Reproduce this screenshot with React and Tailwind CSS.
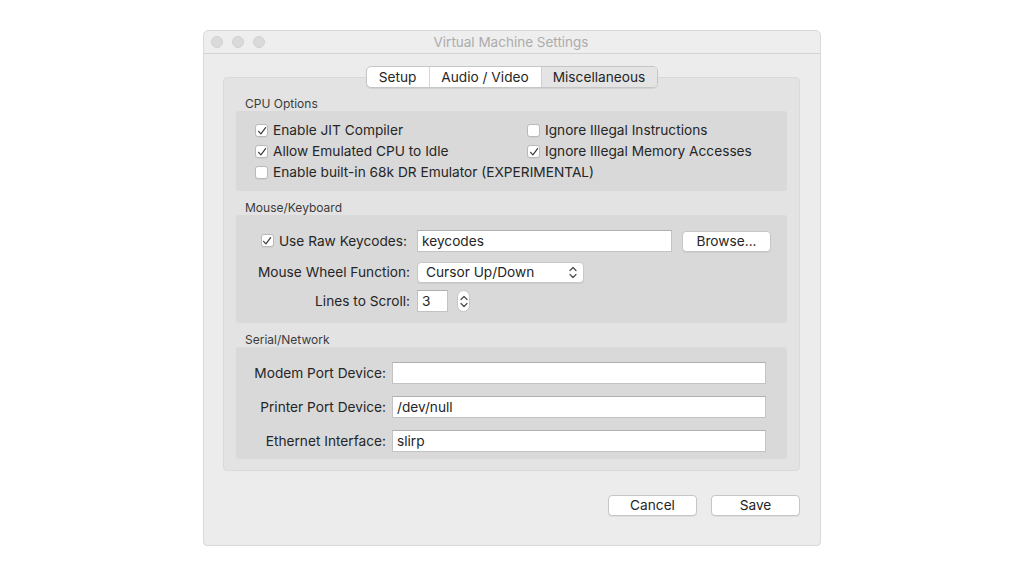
import React from 'react';

const CheckMark = () => (
  <svg width="10" height="10" viewBox="0 0 10 10">
    <path d="M1.6 5.3 L3.9 7.8 L8.6 1.6" fill="none" stroke="#3a3a3a" strokeWidth="1.2" strokeLinecap="round" strokeLinejoin="round" />
  </svg>
);

const Checkbox = ({ checked }) => (
  <span className="w-[13px] h-[13px] shrink-0 bg-white border border-[#b9b9b9] rounded-[3px] flex items-center justify-center shadow-[0_1px_0_rgba(0,0,0,0.04)]">
    {checked && <CheckMark />}
  </span>
);

const CheckRow = ({ checked, label, className = '' }) => (
  <div className={`h-[21px] flex items-center gap-[5px] ${className}`}>
    <Checkbox checked={checked} />
    <span>{label}</span>
  </div>
);

const UpDown = ({ className = '' }) => (
  <svg width="8" height="13" viewBox="0 0 8 13" className={className}>
    <path d="M1 4.5 L4 1.5 L7 4.5" fill="none" stroke="#4a4a4a" strokeWidth="1.2" strokeLinecap="round" strokeLinejoin="round" />
    <path d="M1 8.5 L4 11.5 L7 8.5" fill="none" stroke="#4a4a4a" strokeWidth="1.2" strokeLinecap="round" strokeLinejoin="round" />
  </svg>
);

const TextField = ({ value, className = '' }) => (
  <div className={`h-[22px] bg-white border border-[#c3c3c3] border-t-[#b0b0b0] flex items-center pt-[1px] px-[4px] ${className}`}>
    {value}
  </div>
);

const SectionLabel = ({ children, className = '' }) => (
  <div className={`h-[15px] leading-[15px] pl-[9px] text-[12px] text-[#3c3c3c] ${className}`}>{children}</div>
);

const Tabs = () => (
  <div className="relative z-10 flex justify-center">
    <div className="flex h-[22px] border border-[#c6c6c6] rounded-[5px] overflow-hidden bg-white shadow-[0_1px_1px_rgba(0,0,0,0.08)]">
      <div className="w-[63px] flex items-center justify-center border-r border-[#d6d6d6]">Setup</div>
      <div className="w-[111px] flex items-center justify-center">Audio / Video</div>
      <div className="w-[116px] flex items-center justify-center bg-[#e4e4e4] border-l border-[#d0d0d0]">Miscellaneous</div>
    </div>
  </div>
);

export default function App() {
  return (
    <div className="w-[1024px] h-[576px] bg-white font-['Inter',sans-serif] text-[13.7px] text-[#262626] pt-[30px] flex justify-center items-start">
      <div className="w-[618px] h-[516px] bg-[#ececec] border border-[#d9d9d9] rounded-t-[5px] rounded-b-[4px] flex flex-col">
        {/* title bar */}
        <div className="h-[23px] shrink-0 flex items-center border-b border-[#d3d3d3] bg-[#eeeeee] rounded-t-[5px]">
          <div className="flex gap-[9px] pl-[7px]">
            <span className="w-[12px] h-[12px] rounded-full bg-[#dadada] border border-[#d2d2d2]" />
            <span className="w-[12px] h-[12px] rounded-full bg-[#dadada] border border-[#d2d2d2]" />
            <span className="w-[12px] h-[12px] rounded-full bg-[#dadada] border border-[#d2d2d2]" />
          </div>
          <div className="flex-1 text-center text-[13.5px] text-[#acacac] pr-[63px]">Virtual Machine Settings</div>
        </div>

        <div className="pt-[12px] pl-[19px] pr-[20px] flex flex-col">
          <Tabs />
          <div className="-mt-[11px] bg-[#e3e3e3] border border-[#dadada] rounded-[4px] pt-[18px] pb-[11px] px-[12px]">
            {/* CPU Options */}
            <SectionLabel>CPU Options</SectionLabel>
            <div className="h-[80px] bg-[#d9d9d9] rounded-[3px] pt-[9px] pl-[19px] grid grid-cols-[272px_1fr] content-start">
              <CheckRow checked label="Enable JIT Compiler" />
              <CheckRow label="Ignore Illegal Instructions" />
              <CheckRow checked label="Allow Emulated CPU to Idle" />
              <CheckRow checked label="Ignore Illegal Memory Accesses" />
              <CheckRow label="Enable built-in 68k DR Emulator (EXPERIMENTAL)" className="col-span-2" />
            </div>

            {/* Mouse/Keyboard */}
            <SectionLabel className="mt-[9px]">Mouse/Keyboard</SectionLabel>
            <div className="h-[108px] bg-[#d9d9d9] rounded-[3px] pt-[15px] flex flex-col">
              <div className="h-[22px] flex items-center">
                <div className="w-[174px] flex justify-end items-center gap-[5px] pr-[3px]">
                  <Checkbox checked />
                  <span>Use Raw Keycodes:</span>
                </div>
                <TextField value="keycodes" className="ml-[7px] w-[255px]" />
                <div className="ml-[10px] w-[89px] h-[21px] bg-white border border-[#c6c6c6] rounded-[4px] flex items-center justify-center shadow-[0_1px_0_rgba(0,0,0,0.06)]">
                  Browse...
                </div>
              </div>
              <div className="h-[21px] mt-[10px] flex items-center">
                <div className="w-[174px] text-right">Mouse Wheel Function:</div>
                <div className="ml-[7px] w-[167px] h-[21px] bg-white border border-[#c8c8c8] rounded-[4px] flex items-center pl-[8px] pr-[6px] shadow-[0_1px_0_rgba(0,0,0,0.06)]">
                  <span className="flex-1">Cursor Up/Down</span>
                  <UpDown />
                </div>
              </div>
              <div className="h-[22px] mt-[7px] flex items-center">
                <div className="w-[174px] text-right">Lines to Scroll:</div>
                <TextField value="3" className="ml-[7px] w-[31px]" />
                <div className="ml-[9px] w-[13px] h-[22px] bg-white border border-[#c6c6c6] rounded-full flex items-center justify-center">
                  <UpDown />
                </div>
              </div>
            </div>

            {/* Serial/Network */}
            <SectionLabel className="mt-[9px]">Serial/Network</SectionLabel>
            <div className="h-[112px] bg-[#d9d9d9] rounded-[3px] pt-[15px] flex flex-col gap-[12px]">
              {[
                ['Modem Port Device:', ''],
                ['Printer Port Device:', '/dev/null'],
                ['Ethernet Interface:', 'slirp'],
              ].map(([label, value]) => (
                <div key={label} className="h-[22px] flex items-center">
                  <div className="w-[150px] text-right">{label}</div>
                  <TextField value={value} className="ml-[6px] w-[374px]" />
                </div>
              ))}
            </div>
          </div>

          {/* buttons */}
          <div className="mt-[24px] flex justify-end gap-[14px]">
            <div className="w-[89px] h-[21px] bg-white border border-[#c6c6c6] rounded-[4px] flex items-center justify-center shadow-[0_1px_0_rgba(0,0,0,0.06)]">Cancel</div>
            <div className="w-[89px] h-[21px] bg-white border border-[#c6c6c6] rounded-[4px] flex items-center justify-center shadow-[0_1px_0_rgba(0,0,0,0.06)]">Save</div>
          </div>
        </div>
      </div>
    </div>
  );
}
